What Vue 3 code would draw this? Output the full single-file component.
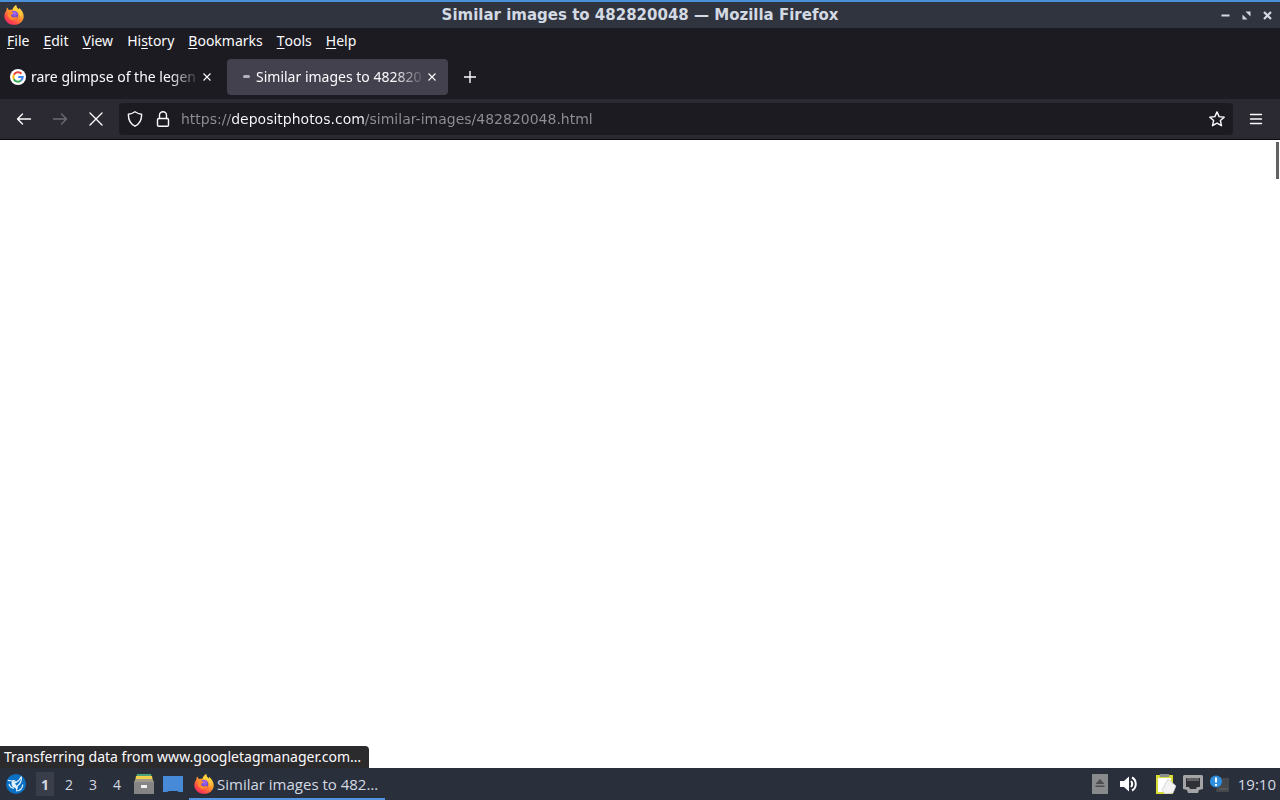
<script setup>
import { ref } from 'vue'

const menus = [
  ['', 'F', 'ile'],
  ['', 'E', 'dit'],
  ['', 'V', 'iew'],
  ['Hi', 's', 'tory'],
  ['', 'B', 'ookmarks'],
  ['', 'T', 'ools'],
  ['', 'H', 'elp'],
]
const url = ref('https://depositphotos.com/similar-images/482820048.html')
const desktops = [1, 2, 3, 4]
</script>

<template>
  <div class="desktop">
    <svg class="defs" aria-hidden="true">
      <defs>
        <linearGradient id="flame" x1="0.8" y1="0.1" x2="0.2" y2="1">
          <stop offset="0" stop-color="#ffe24a" />
          <stop offset="0.4" stop-color="#ff9a2e" />
          <stop offset="0.75" stop-color="#ff4b44" />
          <stop offset="1" stop-color="#ee2670" />
        </linearGradient>
        <radialGradient id="globe" cx="0.55" cy="0.3" r="0.7">
          <stop offset="0" stop-color="#a66bff" />
          <stop offset="1" stop-color="#5a38b0" />
        </radialGradient>
        <symbol id="firefox" viewBox="0 0 20 20">
          <path fill="url(#flame)" d="M3.200 2.600 5 5.200c.8-.4 2.200-.6 3.500-.2C9 3 10.400 1.300 12.200 0c-.2 1.700.8 2.900 2.300 4.500.4-.3.5-.8.400-1.700 2.800 1.900 4.800 5 4.800 8.400 0 4.900-4.100 8.600-9.600 8.600S.4 16 .4 11.200c0-2.200.7-4.100 1.900-5.500 0-1.200.3-2.200.9-3.100z" />
          <circle cx="10" cy="10" r="4.300" fill="url(#globe)" />
          <path fill="#ff8b2c" d="M4.200 7c1.700-.7 3.400-.4 5.200.7 0 1.300-2 1.300-2.400 2.300.2 1.500 1.500 2.500 3 2.400 1.200-.1 2.200-.6 3.300-.9-.8 2.600-3 3.900-5.300 3.400-3-.6-4.800-3.900-3.800-7.900z" />
          <path fill="#ffd23c" d="M12.200 0c-.2 1.700.8 2.900 2.300 4.500 2.300 1.900 3.200 5 1.800 8.300.1-2.900-.8-5.400-2.800-6.500-1.300-.7-2.800-.9-5-1.300C9 3 10.400 1.300 12.200 0z" />
        </symbol>
      </defs>
    </svg>

    <header class="titlebar">
      <svg class="fx"><use href="#firefox" /></svg>
      <h1>Similar images to 482820048 — Mozilla Firefox</h1>
      <div class="window-buttons">
        <button aria-label="Minimize"><svg viewBox="0 0 9 9"><path d="M0.500 4.500h8" stroke="currentColor" stroke-width="2" /></svg></button>
        <button aria-label="Restore"><svg viewBox="0 0 9 9"><path d="M3.500 0.500H8.500V5.500zM0.500 3.500v5h5z" fill="currentColor" /></svg></button>
        <button aria-label="Close window"><svg viewBox="0 0 9 9"><path d="m1 1 7 7m0-7L1 8" stroke="currentColor" stroke-width="2.200" /></svg></button>
      </div>
    </header>

    <nav class="menubar" aria-label="Menu bar">
      <button v-for="m in menus" :key="m.join('')">{{ m[0] }}<u>{{ m[1] }}</u>{{ m[2] }}</button>
    </nav>

    <div class="tabs">
      <div class="tab">
        <svg class="favicon" viewBox="0 0 16 16">
          <circle cx="8" cy="8" r="8" fill="#fff" />
          <g fill="none" stroke-width="2">
            <path d="M11.500 4.700A4.700 4.700 0 0 0 3.900 5.700" stroke="#ea4335" />
            <path d="M3.900 5.700a4.700 4.700 0 0 0 0 4.600" stroke="#fbbc05" />
            <path d="M3.900 10.300a4.700 4.700 0 0 0 7.200 1.200" stroke="#34a853" />
            <path d="M11.100 11.500A4.700 4.700 0 0 0 12.700 8H8.200" stroke="#4285f4" />
          </g>
        </svg>
        <button class="tab-title">rare glimpse of the legen</button>
        <button class="tab-close" aria-label="Close first tab"><svg viewBox="0 0 8 8"><path d="m.5.5 7 7m0-7-7 7" stroke="currentColor" stroke-width="1.100" /></svg></button>
      </div>
      <div class="tab active">
        <span class="loading"><i></i></span>
        <button class="tab-title">Similar images to 482820</button>
        <button class="tab-close" aria-label="Close second tab"><svg viewBox="0 0 8 8"><path d="m.5.5 7 7m0-7-7 7" stroke="currentColor" stroke-width="1.100" /></svg></button>
      </div>
      <button class="new-tab" aria-label="New tab"><svg viewBox="0 0 12 12"><path d="M6 0v12M0 6h12" stroke="currentColor" stroke-width="1.400" /></svg></button>
    </div>

    <div class="toolbar">
      <button class="tool" aria-label="Back"><svg viewBox="0 0 16 16"><path d="M14.500 8H1.500M6.500 3 1.500 8l5 5" /></svg></button>
      <button class="tool" aria-label="Forward" disabled><svg viewBox="0 0 16 16"><path d="M1.500 8h13M9.500 3l5 5-5 5" /></svg></button>
      <button class="tool" aria-label="Stop"><svg viewBox="0 0 16 16"><path d="m2 2 12 12m0-12L2 14" /></svg></button>
      <div class="urlbar">
        <button class="site" aria-label="Tracking protection"><svg viewBox="0 0 16 16"><path d="M8 .8c2 1.400 4.300 2.300 6.600 2.400C14.800 8 13 12.800 8 15.200 3 12.800 1.200 8 1.400 3.200 3.700 3.100 6 2.200 8 .8z" /></svg></button>
        <button class="site" aria-label="Connection secure"><svg viewBox="0 0 16 16"><rect x="2.500" y="7.500" width="11" height="7.700" rx="1.300" /><path d="M4.500 7.500V4.300a3.500 3.500 0 0 1 7 0v3.200" /></svg></button>
        <input v-model="url" type="text" aria-label="Address" spellcheck="false" />
        <button class="site star" aria-label="Bookmark this page"><svg viewBox="0 0 16 16"><path d="m8 .9 2.100 4.700 5.100.6-3.800 3.400 1.100 5.100L8 12.100l-4.500 2.600 1.100-5.100L.8 6.200l5.100-.6z" /></svg></button>
      </div>
      <button class="tool app-menu" aria-label="Application menu"><svg viewBox="0 0 16 16"><path d="M2.500 3.500h11M2.500 8h11M2.500 12.500h11" /></svg></button>
    </div>

    <main class="page">
      <div class="scroll-thumb"></div>
      <p class="status" role="status">Transferring data from www.googletagmanager.com…</p>
    </main>

    <footer class="panel">
      <button class="start" aria-label="Applications">
        <svg viewBox="0 0 20 20">
          <circle cx="10" cy="10" r="10" fill="#0870c5" />
          <path d="M1.800 6.300 6.200 7C7.800 6 9.300 7 9.700 8.600 12 7.500 14 5.500 15.300 2.800c.4 4-1 7.300-4.300 9.200" fill="none" stroke="#e5f3ff" stroke-width="1.200" stroke-linejoin="round" />
          <path d="M5.800 7.500C7.300 6.400 9 7.500 9.300 9.500c.3 1.500 1.200 2.300 2.500 2.400.3 2-.2 3.400-1.800 5 .3-2-.3-3-1.900-3.300C5.900 12.800 5 10.500 5.800 7.500z" fill="#e5f3ff" />
          <path d="M3 10c.8 2.800 2.600 4 5 4.200M10 17c3.800-.2 6.500-2.800 6.800-6.500" fill="none" stroke="#e5f3ff" stroke-width="1.200" />
        </svg>
      </button>
      <div class="pager">
        <button v-for="d in desktops" :key="d" :class="{ current: d === 1 }">{{ d }}</button>
      </div>
      <button class="launcher" aria-label="File manager">
        <svg viewBox="0 0 20 20">
          <path d="M3 0h14l1 4H2z" fill="#4aa27a" /><path d="M2 2h16l1 6H1z" fill="#f3cf4e" />
          <path d="M2 5h16l2 3v12H0V8z" fill="#858585" /><path d="M2 5h16l2 3H0z" fill="#a09a88" />
          <path d="M7 11h6v3H7z" fill="#f2f2f2" />
        </svg>
      </button>
      <button class="launcher" aria-label="Show desktop">
        <svg viewBox="0 0 20 20"><path d="M0 2h20v16h-4l-2-1H6l-2 1H0z" fill="#478bd8" /></svg>
      </button>
      <button class="task"><svg class="fx"><use href="#firefox" /></svg><span>Similar images to 482…</span></button>
      <div class="tray">
        <button class="eject" aria-label="Removable media"><svg viewBox="0 0 16 20"><path d="M0 0h16v20H0z" fill="#888a8c" /><path d="m8 5 4.500 5h-9zM3.500 11.500h9v1.500h-9z" fill="#4b4d50" /></svg></button>
        <button class="volume" aria-label="Volume"><svg viewBox="0 0 18 16"><path d="M0 5h4l5-4.500v15L4 11H0z" fill="#fff" /><path d="M11 5q2.400 3 0 6M12 1.500c5 2.500 5 10.500 0 13" fill="none" stroke="#fff" stroke-width="2" /></svg></button>
        <button class="clip" aria-label="Clipboard"><svg viewBox="0 0 20 20"><path d="M0 1h17v19H0z" fill="#d8dc35" /><path d="M2 4h13v14H2z" fill="#fff" /><path d="M4 0h9v3H4z" fill="#8a8d90" /><path d="m12 5 8 7-3 7-8 1-3-4z" fill="#f3f3f3" stroke="#c9c9c9" stroke-width=".7" /></svg></button>
        <button class="network" aria-label="Network"><svg viewBox="0 0 20 18"><path d="M1 0h18l1 1v13l-4 1-1 3H5l-1-3-4-1V1z" fill="#a4a4a6" /><path d="M3 3h14v9h-3l-1 2H7l-1-2H3z" fill="#303136" /><path d="M5 3v3m2-3v3m2-3v3m2-3v3m2-3v3m2-3v3" stroke="#aaa" stroke-width=".8" /></svg></button>
        <button class="notice" aria-label="Updates"><svg viewBox="0 0 20 18"><path d="M8 3h11v14H6z" fill="#44474b" /><path d="M9 14h9" stroke="#66696d" /><circle cx="6" cy="6.500" r="6" fill="#2f8fe0" /><path d="M6 2.500v5M6 9v2" stroke="#fff" stroke-width="2" /></svg></button>
        <time>19:10</time>
      </div>
    </footer>
  </div>
</template>

<style>
body { margin: 0; background: #fff; }
</style>

<style scoped>
.desktop {
  display: flex;
  flex-direction: column;
  height: 100vh;
  overflow: hidden;
  font-family: "Noto Sans", sans-serif;
  font-size: 14px;
  color: #fbfbfe;
}
.defs { position: absolute; width: 0; height: 0; }
button {
  display: flex;
  align-items: center;
  justify-content: center;
  padding: 0;
  border: 0;
  background: none;
  font: inherit;
  color: inherit;
  flex: none;
}
svg { display: block; flex: none; }
.fx { width: 20px; height: 20px; }

.titlebar {
  display: grid;
  grid-template-columns: 1fr auto 1fr;
  align-items: center;
  box-sizing: border-box;
  height: 28px;
  padding: 0 4px;
  border-top: 2px solid #4a90d9;
  background: #2f343f;
  color: #d3dae3;
}
.titlebar h1 { margin: 0; font: bold 15px "DejaVu Sans", sans-serif; }
.window-buttons { display: flex; justify-content: flex-end; gap: 12px; padding-right: 4px; }
.window-buttons svg { width: 9px; height: 9px; }

.menubar { display: flex; gap: 14px; height: 24px; padding: 0 7px 2px; background: #1c1b22; }
.menubar button { white-space: pre; }
.menubar u { text-underline-offset: 2px; text-decoration-thickness: 1px; }

.tabs { display: flex; align-items: center; height: 45px; padding-right: 8px; background: #1c1b22; }
.tab {
  display: flex;
  align-items: center;
  box-sizing: border-box;
  width: 221px;
  height: 36px;
  padding: 0 10px;
  border-radius: 4px;
}
.tab + .tab { margin-left: 6px; padding: 0 12px 0 11px; }
.tab.active { background: #42414d; }
.favicon { width: 16px; height: 16px; margin-right: 5px; }
.loading { display: flex; justify-content: center; width: 16px; margin-right: 2px; }
.loading i { width: 7px; height: 3px; border-radius: 2px; background: #b4b3bb; }
.tab-title {
  flex: 1;
  min-width: 0;
  overflow: hidden;
  justify-content: flex-start;
  white-space: nowrap;
  mask-image: linear-gradient(to left, transparent, #000 32px);
}
.tab-close { margin-left: 2px; }
.tab-close svg { width: 8px; height: 8px; }
.new-tab { margin-left: 16px; }
.new-tab svg { width: 12px; height: 12px; }

.toolbar {
  display: flex;
  align-items: center;
  box-sizing: border-box;
  height: 41px;
  padding: 0 6px;
  border-bottom: 1px solid #0c0c0d;
  background: #2b2a33;
}
.tool { width: 36px; height: 32px; }
.tool:disabled { color: #6c6b74; }
.tool svg, .site svg { width: 16px; height: 16px; fill: none; stroke: currentColor; stroke-width: 1.400; stroke-linecap: round; stroke-linejoin: round; }
.urlbar {
  display: flex;
  align-items: center;
  flex: 1;
  min-width: 0;
  height: 32px;
  margin: 0 5px;
  padding: 0 2px;
  border-radius: 4px;
  background: #1c1b22;
}
.site { width: 28px; height: 28px; }
.urlbar input {
  flex: 1;
  min-width: 0;
  height: 28px;
  margin-left: 4px;
  padding: 0;
  border: 0;
  outline: 0;
  font: 14px "DejaVu Sans", sans-serif;
  color: transparent;
  caret-color: #fbfbfe;
  background: linear-gradient(90deg, #8f8f98 50px, #fbfbfe 50px, #fbfbfe 184px, #8f8f98 184px) text;
}

.page { position: relative; flex: 1; min-height: 0; background: #fff; }
.scroll-thumb { position: absolute; top: 2px; right: 1px; width: 3px; height: 37px; background: #616161; }
.status {
  position: absolute;
  left: 0;
  bottom: 0;
  box-sizing: border-box;
  height: 22px;
  margin: 0;
  padding: 0 8px 0 4px;
  border-radius: 0 4px 0 0;
  line-height: 22px;
  background: #2b2a2d;
}

.panel {
  display: flex;
  align-items: center;
  height: 32px;
  background: #2a2f3c;
  color: #d3dae3;
  font-family: "Open Sans", sans-serif;
  font-size: 15px;
}
.start { margin: 0 7px 0 6px; }
.start svg { width: 20px; height: 20px; }
.pager { display: flex; align-self: stretch; align-items: center; font-size: 14px; }
.pager button { width: 24px; height: 24px; }
.pager .current { width: 18px; margin: 0 3px; background: #3a3e4b; font-weight: bold; }
.launcher { width: 29px; }
.launcher svg { width: 20px; height: 20px; }
.task {
  align-self: stretch;
  box-sizing: border-box;
  width: 196px;
  margin-left: 2px;
  padding-left: 5px;
  justify-content: flex-start;
  gap: 3px;
  border-top: 2px solid transparent;
  border-bottom: 2px solid #5294e2;
}
.tray { display: flex; align-items: center; margin-left: auto; padding-right: 4px; }
.eject svg { width: 16px; height: 20px; }
.volume { margin-left: 12px; }
.volume svg { width: 18px; height: 16px; }
.clip { margin-left: 18px; }
.clip svg { width: 20px; height: 20px; }
.network, .notice { margin-left: 7px; }
.network svg, .notice svg { width: 20px; height: 18px; }
.tray time { margin-left: 8px; }
</style>
